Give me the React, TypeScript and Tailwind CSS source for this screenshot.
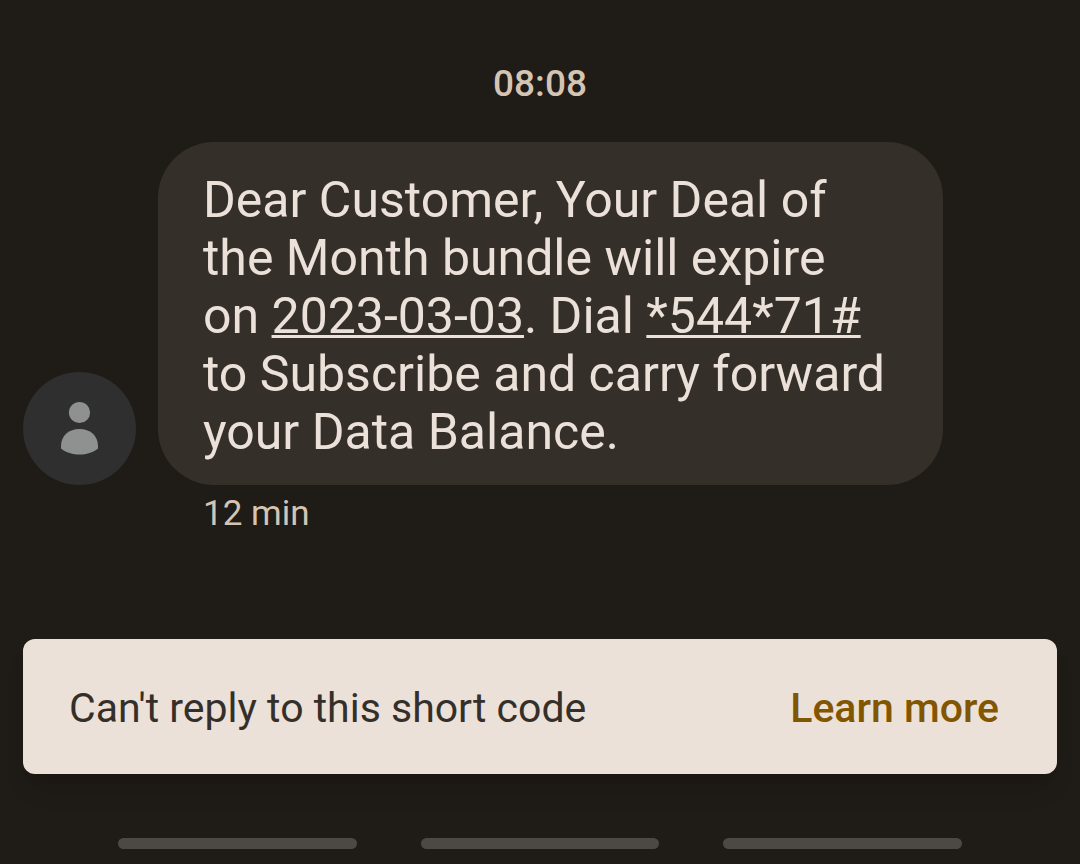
import React from 'react';

interface MessageData {
  sentAt: string;
  age: string;
}

const message: MessageData = {
  sentAt: '08:08',
  age: '12 min',
};

const Avatar: React.FC = () => (
  <div className="flex size-[113px] shrink-0 items-center justify-center rounded-full bg-[#2f2f2f]">
    <svg viewBox="0 0 39 55" className="h-[55px] w-[39px]" fill="#8e918f" aria-hidden="true">
      <circle cx="19.500" cy="11.500" r="10.600" />
      <path d="M1 47.500V45C1 34.500 9 28 19.500 28S38 34.500 38 45V47.500C33 51.500 26 53.500 19.500 53.500S6 51.500 1 47.500Z" />
    </svg>
  </div>
);

const Bubble: React.FC = () => (
  <div className="max-w-[785px] rounded-[56px] bg-[#352f2a] pt-[29px] pr-[54px] pb-6 pl-[45px] text-[50px] leading-[58px] text-[#ebe1d9]">
    <p>
      Dear Customer, Your Deal of the Month bundle will expire on{' '}
      <a href="#date" className="underline decoration-3 underline-offset-2">2023-03-03</a>. Dial{' '}
      <a href="tel:*544*71%23" className="underline decoration-3 underline-offset-2">*544*71#</a>{' '}
      to Subscribe and carry forward your Data Balance.
    </p>
  </div>
);

const NavBar: React.FC = () => (
  <nav className="flex justify-center gap-16 px-[118px]">
    <button type="button" aria-label="Recent apps" className="h-[11px] flex-1 rounded-full bg-[#4c4945]" />
    <button type="button" aria-label="Home" className="h-[11px] flex-1 rounded-full bg-[#4c4945]" />
    <button type="button" aria-label="Back" className="h-[11px] flex-1 rounded-full bg-[#4c4945]" />
  </nav>
);

const App: React.FC = () => {
  return (
    <div className="flex min-h-screen flex-col bg-[#1f1b16] font-[Roboto,sans-serif]">
      <main className="px-[23px] pt-[61px]">
        <p className="text-center text-[37px] leading-[46px] font-medium text-[#d3c4b4]">{message.sentAt}</p>
        <div className="mt-[35px] flex items-end gap-[22px]">
          <Avatar />
          <Bubble />
        </div>
        <p className="mt-1 pl-[180px] text-[35px] leading-[50px] text-[#d3c4b4]">{message.age}</p>
      </main>

      <div className="mx-[23px] mt-[100px] flex items-center justify-between rounded-xl bg-[#ebe1d9] pt-[42px] pr-[58px] pb-[38px] pl-[46px] text-[41px] leading-[55px] shadow-xl">
        <span className="text-[#352f2a]">Can't reply to this short code</span>
        <button type="button" className="font-medium text-[#825500]">Learn more</button>
      </div>

      <div className="mt-16 pb-[15px]">
        <NavBar />
      </div>
    </div>
  );
};

export default App;
